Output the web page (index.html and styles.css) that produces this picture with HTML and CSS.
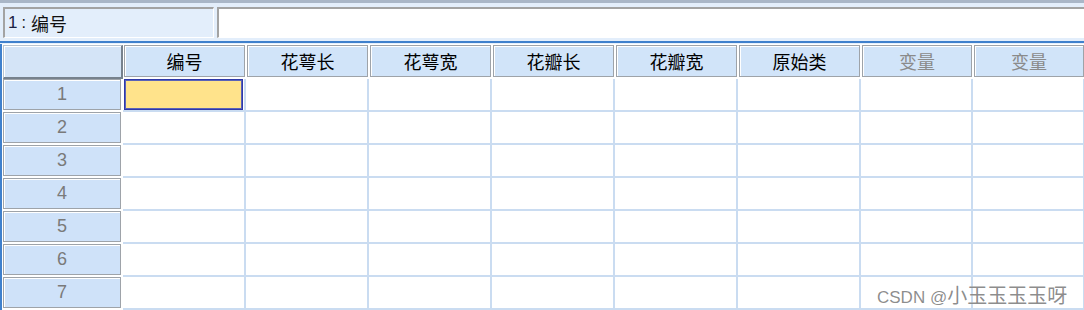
FILE: index.html
```html
<!DOCTYPE html>
<html lang="zh">
<head>
  <meta charset="UTF-8" />
  <title>数据视图</title>
  <link rel="stylesheet" href="styles.css">
</head>
<body>

  <!-- 单元格编辑栏 -->
  <div class="toolbar">
    <div class="cell-ref"><span class="ref-num">1</span><span class="ref-sep">:</span>编号</div>
    <div class="cell-value"></div>
  </div>

  <div class="sheet">
    <div class="grid">
      <div class="corner"></div>
      <div class="col-head"><span>编号</span></div>
      <div class="col-head"><span>花萼长</span></div>
      <div class="col-head"><span>花萼宽</span></div>
      <div class="col-head"><span>花瓣长</span></div>
      <div class="col-head"><span>花瓣宽</span></div>
      <div class="col-head"><span>原始类</span></div>
      <div class="col-head empty"><span>变量</span></div>
      <div class="col-head empty"><span>变量</span></div>

      <div class="row-head"><span>1</span></div>
      <div class="cell"><div class="active"></div></div>
      <div class="cell"></div><div class="cell"></div><div class="cell"></div>
      <div class="cell"></div><div class="cell"></div><div class="cell"></div><div class="cell"></div>

      <div class="row-head"><span>2</span></div>
      <div class="cell"></div><div class="cell"></div><div class="cell"></div><div class="cell"></div>
      <div class="cell"></div><div class="cell"></div><div class="cell"></div><div class="cell"></div>

      <div class="row-head"><span>3</span></div>
      <div class="cell"></div><div class="cell"></div><div class="cell"></div><div class="cell"></div>
      <div class="cell"></div><div class="cell"></div><div class="cell"></div><div class="cell"></div>

      <div class="row-head"><span>4</span></div>
      <div class="cell"></div><div class="cell"></div><div class="cell"></div><div class="cell"></div>
      <div class="cell"></div><div class="cell"></div><div class="cell"></div><div class="cell"></div>

      <div class="row-head"><span>5</span></div>
      <div class="cell"></div><div class="cell"></div><div class="cell"></div><div class="cell"></div>
      <div class="cell"></div><div class="cell"></div><div class="cell"></div><div class="cell"></div>

      <div class="row-head"><span>6</span></div>
      <div class="cell"></div><div class="cell"></div><div class="cell"></div><div class="cell"></div>
      <div class="cell"></div><div class="cell"></div><div class="cell"></div><div class="cell"></div>

      <div class="row-head"><span>7</span></div>
      <div class="cell"></div><div class="cell"></div><div class="cell"></div><div class="cell"></div>
      <div class="cell"></div><div class="cell"></div><div class="cell"></div><div class="cell"></div>
    </div>

    <div class="watermark">CSDN @<span class="wm-cjk">小玉玉玉玉呀</span></div>
  </div>

</body>
</html>
```

FILE: styles.css
```css
body {
  margin: 0;
  padding: 0;
  background: #fff;
  font-family: "Noto Sans CJK SC", "Liberation Sans", sans-serif;
  width: 1084px;
  height: 310px;
  overflow: hidden;
}

/* 编辑栏 */
.toolbar {
  border-top: 3px solid #a9b6c7;
  background: #e3eefb;
  display: flex;
  gap: 3px;
  padding: 4px 0 0 3px;
  height: 34px;
}
.cell-ref {
  width: 205px;
  height: 28px;
  border-top: 2px solid #a3a3a3;
  border-left: 2px solid #a3a3a3;
  border-bottom: 1px solid #fff;
  border-right: 1px solid #fff;
  padding-left: 3px;
  font-size: 18px;
  line-height: 28px;
  color: #111;
  display: flex;
  align-items: center;
}
.ref-num {
  font-family: "Liberation Sans", sans-serif;
  font-size: 17px;
  color: #1c2244;
}
.ref-sep {
  font-family: "Liberation Sans", sans-serif;
  font-size: 16px;
  margin: 0 5px 0 4px;
}
.cell-value {
  flex: 1;
  height: 28px;
  background: #fff;
  border-top: 2px solid #a3a3a3;
  border-left: 2px solid #a3a3a3;
  border-bottom: 1px solid #fff;
}

/* 数据表格 */
.sheet {
  position: relative;
  border-top: 2px solid #3f80cc;
  padding-top: 1px;
  background: #e6f0fb;
}
.grid {
  display: grid;
  grid-template-columns: 121px repeat(6, 123px) 112px 112px;
  grid-template-rows: 35px repeat(7, 33px);
  border-left: 2px solid #3f80cc;
  background: #fff;
}

.corner {
  margin: 1px 0 0 1px;
  background: #d4e4f7;
  border-top: 1px solid #b8c3cf;
  border-left: 1px solid #b8c3cf;
  border-right: 2px solid #76818d;
  border-bottom: 2px solid #76818d;
  box-shadow: inset 1px 1px 0 #fff;
}

.col-head {
  margin: 1px 1px 2px 1px;
  background: #d1e4f9;
  border: 1px solid #9ea3a9;
  box-shadow: inset 1px 1px 0 #fff;
  display: flex;
  align-items: center;
  justify-content: center;
  font-size: 18px;
  color: #000;
}
.col-head.empty {
  color: #8a8a8a;
}

.row-head {
  margin: 0 2px 2px 1px;
  background: #cfe2f9;
  border: 1px solid #9ea3a9;
  box-shadow: inset 1px 1px 0 #fff;
  display: flex;
  align-items: center;
  justify-content: center;
  font-family: "Liberation Sans", sans-serif;
  font-size: 18px;
  color: #7a7a7a;
}

.cell {
  border-right: 2px solid #cadcf1;
  border-bottom: 2px solid #cadcf1;
  position: relative;
}
.active {
  position: absolute;
  left: 1px;
  top: 0;
  right: 1px;
  bottom: 0;
  background: #ffe38b;
  border: 1px solid #2f38a8;
  box-shadow: inset 0 0 0 1px #5a63b8;
}

.watermark {
  position: absolute;
  left: 877px;
  top: 237px;
  font-family: "Liberation Sans", sans-serif;
  font-size: 17px;
  color: rgba(90, 90, 90, 0.7);
  text-shadow: 0 0 1px #fff;
  white-space: nowrap;
}
.wm-cjk {
  font-family: "Noto Sans CJK SC", sans-serif;
  font-size: 20px;
}
```
